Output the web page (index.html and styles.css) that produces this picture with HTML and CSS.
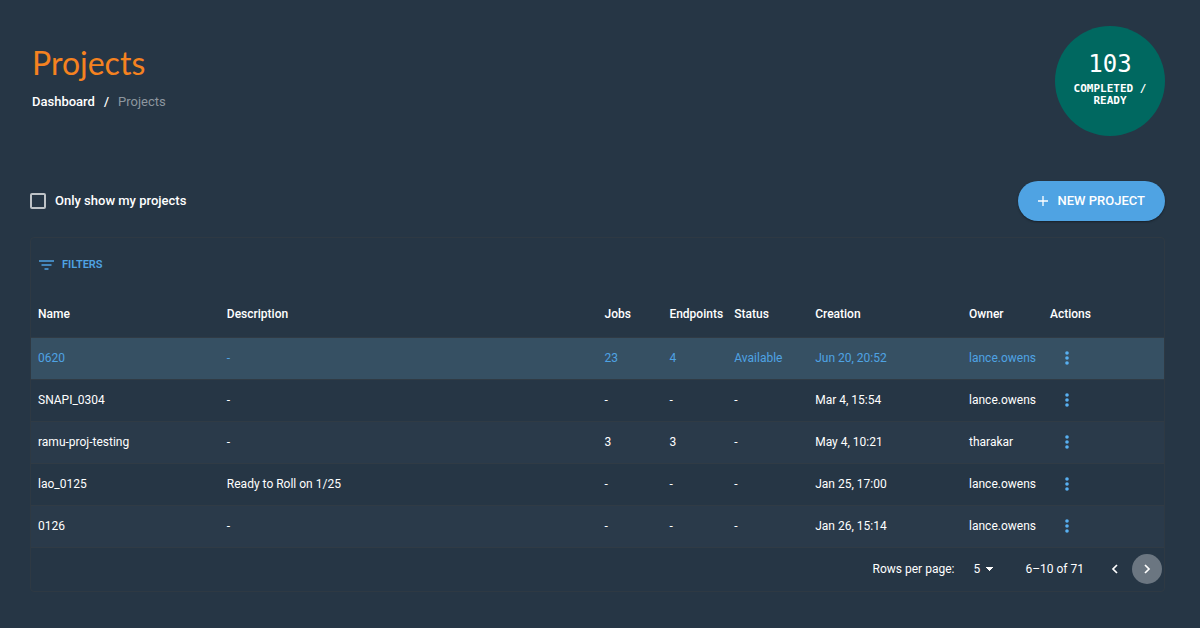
FILE: index.html
```html
<!DOCTYPE html>
<html lang="en">
<head>
<meta charset="utf-8">
<meta name="viewport" content="width=device-width, initial-scale=1">
<title>Projects</title>
<link rel="stylesheet" href="styles.css">
</head>
<body>
<svg class="defs" aria-hidden="true">
  <symbol id="dots" viewBox="0 0 16 16"><circle cx="8" cy="3" r="1.8"/><circle cx="8" cy="8" r="1.8"/><circle cx="8" cy="13" r="1.8"/></symbol>
</svg>
<main class="page">
  <header class="top">
    <div>
      <h1 class="title">Projects</h1>
      <nav class="crumbs" aria-label="Breadcrumb"><a href="#">Dashboard</a><span>/</span><span class="current">Projects</span></nav>
    </div>
    <div class="stat"><strong class="stat-count">103</strong><span class="stat-label">COMPLETED / READY</span></div>
  </header>
  <div class="toolbar">
    <label class="only-mine"><input type="checkbox" class="check">Only show my projects</label>
    <button class="new-project" type="button"><svg class="plus" viewBox="0 0 10 10" aria-hidden="true"><path d="M5 0v10M0 5h10"/></svg>NEW PROJECT</button>
  </div>
  <section class="panel">
    <div class="panel-head">
      <button class="filters" type="button"><svg class="filter-icon" viewBox="0 0 15 10" aria-hidden="true"><path d="M0 1h15M2.500 5h10M5.500 9h4"/></svg>FILTERS</button>
    </div>
    <table class="projects">
      <colgroup><col class="c-name"><col class="c-desc"><col class="c-count"><col class="c-count"><col class="c-status"><col class="c-date"><col class="c-owner"><col></colgroup>
      <thead><tr><th>Name</th><th>Description</th><th>Jobs</th><th>Endpoints</th><th>Status</th><th>Creation</th><th>Owner</th><th>Actions</th></tr></thead>
      <tbody>
        <tr class="selected"><td>0620</td><td>-</td><td>23</td><td>4</td><td>Available</td><td>Jun 20, 20:52</td><td>lance.owens</td><td><button class="more" type="button" aria-label="Actions for 0620"><svg viewBox="0 0 16 16"><use href="#dots"/></svg></button></td></tr>
        <tr><td>SNAPI_0304</td><td>-</td><td>-</td><td>-</td><td>-</td><td>Mar 4, 15:54</td><td>lance.owens</td><td><button class="more" type="button" aria-label="Actions for SNAPI_0304"><svg viewBox="0 0 16 16"><use href="#dots"/></svg></button></td></tr>
        <tr><td>ramu-proj-testing</td><td>-</td><td>3</td><td>3</td><td>-</td><td>May 4, 10:21</td><td>tharakar</td><td><button class="more" type="button" aria-label="Actions for ramu-proj-testing"><svg viewBox="0 0 16 16"><use href="#dots"/></svg></button></td></tr>
        <tr><td>lao_0125</td><td>Ready to Roll on 1/25</td><td>-</td><td>-</td><td>-</td><td>Jan 25, 17:00</td><td>lance.owens</td><td><button class="more" type="button" aria-label="Actions for lao_0125"><svg viewBox="0 0 16 16"><use href="#dots"/></svg></button></td></tr>
        <tr><td>0126</td><td>-</td><td>-</td><td>-</td><td>-</td><td>Jan 26, 15:14</td><td>lance.owens</td><td><button class="more" type="button" aria-label="Actions for 0126"><svg viewBox="0 0 16 16"><use href="#dots"/></svg></button></td></tr>
      </tbody>
    </table>
    <footer class="pager">
      <label for="rows">Rows per page:</label>
      <select id="rows" class="rows"><option>5</option><option>10</option><option>25</option></select>
      <span class="range">6–10 of 71</span>
      <button class="step" type="button" aria-label="Previous page"><svg viewBox="0 0 10 10"><path d="M7 1 3 5l4 4"/></svg></button>
      <button class="step active" type="button" aria-label="Next page"><svg viewBox="0 0 10 10"><path d="m3 1 4 4-4 4"/></svg></button>
    </footer>
  </section>
</main>
</body>
</html>
```
FILE: styles.css
```css
* { box-sizing: border-box; }
body {
  margin: 0;
  background: #263645;
  color: #fff;
  font: 500 12px/16px Roboto, "Liberation Sans", sans-serif;
}
button, select, input { font: inherit; color: inherit; margin: 0; }
button { border: 0; padding: 0; background: none; cursor: pointer; }
.defs { display: none; }
.page { padding: 26px 35px 37px 30px; }

.top { display: flex; justify-content: space-between; align-items: flex-start; padding: 0 0 0 2px; }
.title {
  margin: 17px 0 11px;
  color: #f58220;
  font: 400 32px/40px Lato, sans-serif;
}
.crumbs { display: flex; gap: 9px; font-size: 13px; }
.crumbs a { color: inherit; text-decoration: none; }
.crumbs .current { color: #8d969f; font-weight: 400; }
.stat {
  display: flex;
  flex-direction: column;
  align-items: center;
  gap: 5px;
  width: 110px;
  height: 110px;
  padding: 24px 16px 0;
  border-radius: 50%;
  background: #006860;
  font-family: "DejaVu Sans Mono", monospace;
  text-align: center;
}
.stat-count { font-size: 24px; line-height: 28px; font-weight: 400; }
.stat-label { font-size: 11px; line-height: 12px; font-weight: 700; }

.toolbar { display: flex; justify-content: space-between; align-items: center; margin: 45px 0 16px; }
.only-mine { display: flex; align-items: center; gap: 9px; font-size: 13px; }
.check {
  appearance: none;
  width: 16px;
  height: 16px;
  border: 2px solid #bec3c7;
  border-radius: 2px;
}
.new-project {
  display: flex;
  align-items: center;
  gap: 10px;
  height: 40px;
  padding: 0 20px;
  border-radius: 20px;
  background: #4fa3e3;
  box-shadow: 0 1px 2px #17212b;
  font-size: 13px;
}
.plus { width: 10px; height: 10px; fill: none; stroke: #fff; stroke-width: 1.3; }

.panel { border: 1px solid #2e3943; border-radius: 4px; }
.panel-head { padding: 19px 8px 18px; }
.filters { display: flex; align-items: center; gap: 8px; color: #4fa3e3; font-size: 11px; font-weight: 600; }
.filter-icon { width: 15px; height: 10px; fill: none; stroke: #4fa3e3; stroke-width: 1.7; }

.projects { width: 100%; table-layout: fixed; border-collapse: collapse; }
.c-name { width: 16.67%; }
.c-desc { width: 33.33%; }
.c-count { width: 5.73%; }
.c-status { width: 7.14%; }
.c-date { width: 13.58%; }
.c-owner { width: 7.14%; }
.projects th, .projects td { padding: 0 0 0 7px; text-align: left; white-space: nowrap; font-weight: 500; border-bottom: 1px solid #303b45; }
.projects th { height: 46px; }
.projects td { height: 42px; font-weight: 400; }
.projects tbody tr:nth-child(odd) { background: #2a3a4a; }
.projects tbody tr.selected { background: #365063; color: #4fa3e3; }
.more { display: block; width: 16px; height: 16px; margin-left: 9px; }
.more svg { display: block; width: 16px; height: 16px; fill: #58b0f1; }

.pager { display: flex; align-items: center; justify-content: flex-end; height: 43px; padding-right: 2px; font-weight: 400; }
.rows {
  appearance: none;
  width: 21px;
  margin: 0 31px 0 19px;
  padding: 0;
  border: 0;
  background:
    linear-gradient(to bottom left, #fff 50%, transparent 50%) right 4px center / 4px 4px no-repeat,
    linear-gradient(to bottom right, #fff 50%, transparent 50%) right center / 4px 4px no-repeat;
}
.range { margin-right: 16px; }
.step { display: grid; place-items: center; width: 30px; height: 30px; border-radius: 50%; }
.step + .step { margin-left: 2px; }
.step svg { width: 10px; height: 10px; fill: none; stroke: #fff; stroke-width: 1.7; }
.step.active { background: #6b7681; }
```
